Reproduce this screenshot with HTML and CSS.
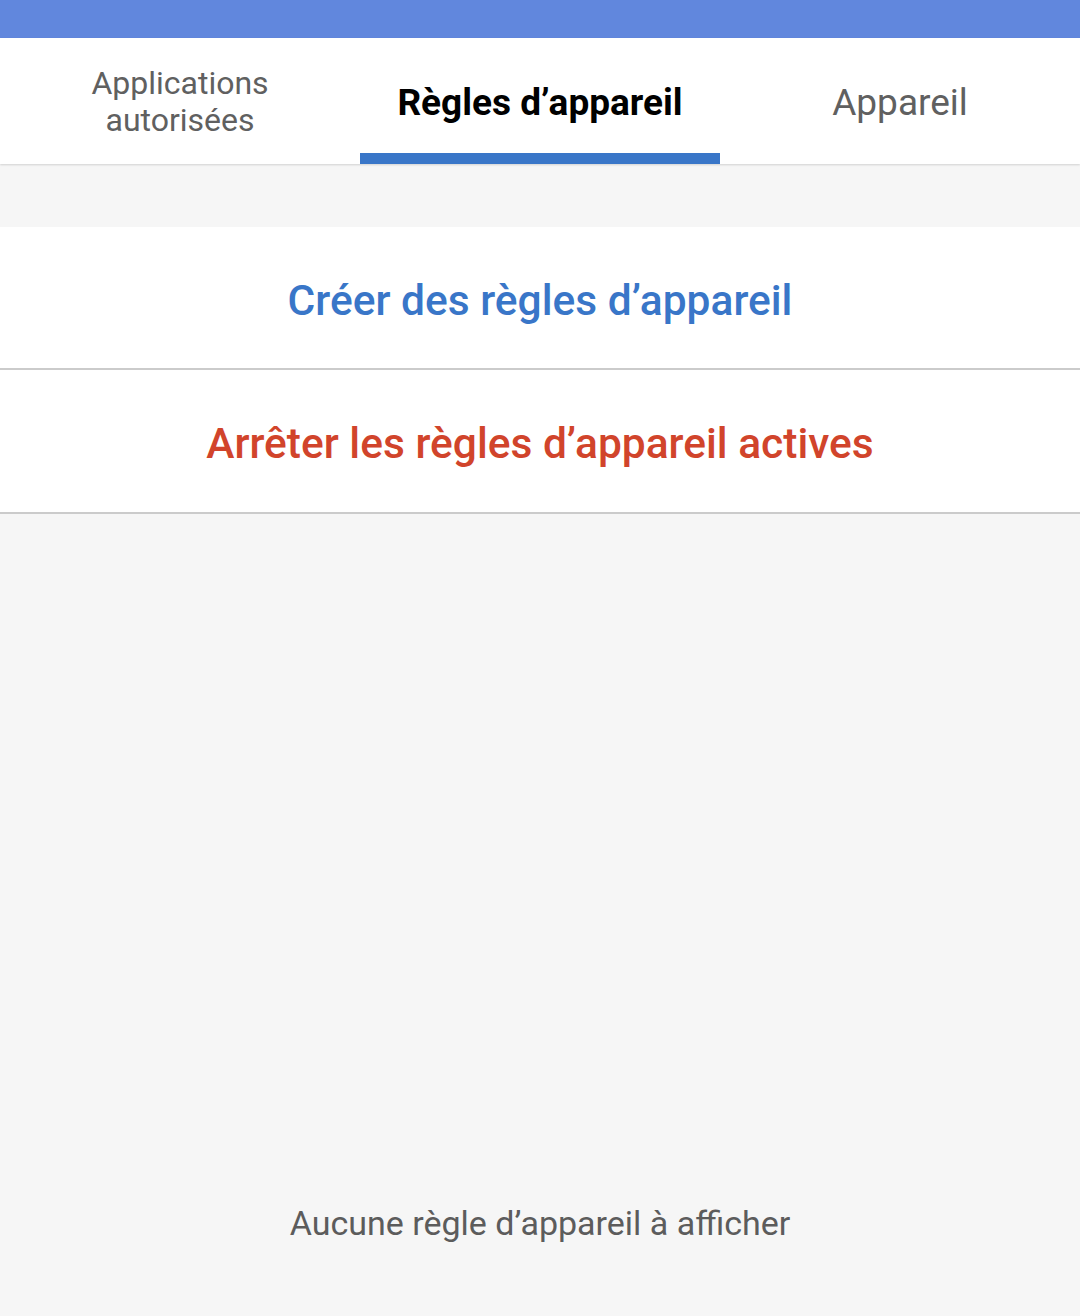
FILE: index.html
```html
<!DOCTYPE html>
<html lang="fr">
<head>
    <meta charset="UTF-8">
    <meta name="viewport" content="width=device-width, initial-scale=1.0">
    <title>Règles d’appareil</title>
    <link rel="stylesheet" href="styles.css">
</head>
<body>

    <div class="statusbar"></div>

    <nav class="tabs">
        <div class="tab tab-small">Applications<br>autorisées</div>
        <div class="tab active">Règles d’appareil</div>
        <div class="tab">Appareil</div>
    </nav>

    <div class="actions">
        <div class="action action-create">Créer des règles d’appareil</div>
        <div class="action action-stop">Arrêter les règles d’appareil actives</div>
    </div>

    <div class="empty">
        <p>Aucune règle d’appareil à afficher</p>
    </div>

</body>
</html>
```

FILE: styles.css
```css
html, body {
    height: 100%;
}

body {
    font-family: Roboto, "Noto Sans", Arial, sans-serif;
    background-color: #f6f6f6;
    margin: 0;
    padding: 0;
    display: flex;
    flex-direction: column;
}

.statusbar {
    height: 38px;
    background-color: #6187dd;
}

.tabs {
    display: grid;
    grid-template-columns: repeat(3, 1fr);
    background-color: #fff;
    box-shadow: 0 1px 2px rgba(0,0,0,0.15);
}

.tab {
    height: 102px;
    padding-top: 13px;
    border-bottom: 11px solid transparent;
    display: flex;
    align-items: center;
    justify-content: center;
    text-align: center;
    font-size: 37px;
    color: #606060;
}

.tab-small {
    font-size: 32px;
    line-height: 37px;
}

.tab.active {
    color: #000;
    font-weight: 700;
    border-bottom-color: #3976c8;
}

.actions {
    margin-top: 63px;
    background-color: #fff;
}

.action {
    height: 136px;
    padding-top: 5px;
    display: flex;
    align-items: center;
    justify-content: center;
    border-bottom: 2px solid #cbcbcb;
    font-size: 42.5px;
    font-weight: 500;
}

.action + .action {
    height: 137px;
}

.action-create {
    color: #3976c8;
}

.action-stop {
    color: #d1442b;
}

.empty {
    flex: 1;
    display: flex;
    align-items: flex-end;
    justify-content: center;
}

.empty p {
    margin: 0 0 73px;
    font-size: 34px;
    line-height: 40px;
    color: #5c5c5c;
}
```
